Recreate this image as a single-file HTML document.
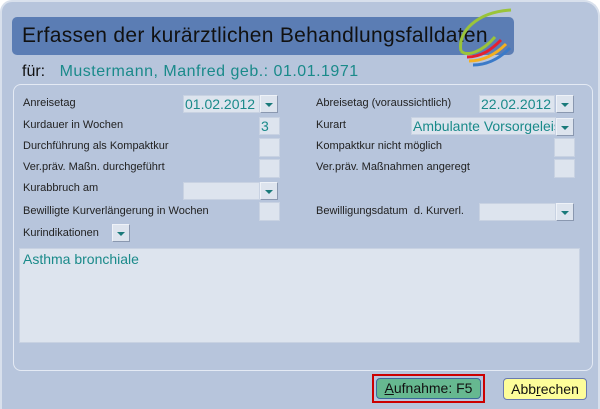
<!DOCTYPE html>
<html><head><style>
*{margin:0;padding:0;box-sizing:border-box}
body{width:600px;height:409px;background:#fff;font-family:"Liberation Sans",Arial,sans-serif;position:relative;overflow:hidden}
.win{position:absolute;left:0;top:0;width:600px;height:409px;background:#b7c5dc;border-radius:12px 16px 0 0;border:2px solid #d8e0ec;border-bottom:none}
.title{position:absolute;left:10px;top:15px;width:502px;height:38px;background:#5b7db4;border-radius:5px;font-family:"Liberation Sans",Arial,sans-serif;font-size:21px;color:#111;padding:7px 0 0 10px;white-space:nowrap;letter-spacing:0.3px}
.fur{position:absolute;left:20px;top:61px;font-size:16px;color:#111;white-space:nowrap}
.fur span{color:#1a8a8a;margin-left:10px;letter-spacing:0.5px}
.panel{position:absolute;left:11px;top:82px;width:580px;height:287px;border:1px solid #e4eaf4;border-radius:8px}
.l{position:absolute;font-size:11px;color:#222;white-space:nowrap}
.in{position:absolute;height:18px;background:#dde4ee;border:1px solid #c8d2e2;font-size:14px;color:#1a8a8a;line-height:16px;padding-left:1px;overflow:hidden;white-space:nowrap}
.btn{position:absolute;width:18px;height:18px;background:#dde4ee;border:1px solid #8a98b0;border-top-color:#eef2f8;border-left-color:#eef2f8}
.btn:after{content:"";position:absolute;left:4px;top:7px;border-left:4px solid transparent;border-right:4px solid transparent;border-top:4px solid #1a7a7a}
.cb{position:absolute;width:21px;height:19px;background:#dde4ee;border:1px solid #c8d2e2}
.ta{position:absolute;left:19px;top:248px;width:561px;height:95px;background:#dde4ee;border:1px solid #c8d2e2;font-size:14px;color:#1a8a8a;padding:2px 3px}
.b1{position:absolute;left:372px;top:374px;width:113px;height:29px;border:2px solid #c00;padding:2px}
.b1 div{width:100%;height:100%;background:#66b890;border:1px solid #3a6a9a;border-radius:4px;font-size:14px;text-align:center;line-height:19px;color:#111}
.b2{position:absolute;left:503px;top:378px;width:84px;height:22px;background:#fdfd9a;border:1px solid #6a7ab0;border-radius:4px;font-size:14px;text-align:center;line-height:20px;color:#111}
</style></head><body>
<div class="win">
<div class="title">Erfassen der kurärztlichen Behandlungsfalldaten</div>
<svg style="position:absolute;left:435px;top:5px" width="80" height="60" viewBox="0 0 80 60">
<path d="M74 3 C40 5 20 25 24 44" stroke="#9ac43a" stroke-width="3" fill="none"/>
<path d="M24 44 C30 50 45 45 58 30" stroke="#9ac43a" stroke-width="3" fill="none"/>
<path d="M30 50 C45 50 55 42 64 33" stroke="#e52030" stroke-width="3" fill="none"/>
<path d="M32 54 C48 54 60 46 69 37" stroke="#f4b020" stroke-width="3" fill="none"/>
<path d="M36 58 C52 58 64 50 73 41" stroke="#3a7ac8" stroke-width="3" fill="none"/>
</svg>
<div class="fur">für: <span>Mustermann, Manfred geb.: 01.01.1971</span></div>
<div class="panel"></div>
</div>
<div class="l" style="left:23px;top:97px">Anreisetag</div>
<div class="in" style="left:183px;top:95px;width:77px">01.02.2012</div><div class="btn" style="left:260px;top:95px"></div>
<div class="l" style="left:23px;top:119px">Kurdauer in Wochen</div>
<div class="in" style="left:259px;top:117px;width:21px">3</div>
<div class="l" style="left:23px;top:140px">Durchführung als Kompaktkur</div>
<div class="cb" style="left:259px;top:138px"></div>
<div class="l" style="left:23px;top:161px">Ver.präv. Maßn. durchgeführt</div>
<div class="cb" style="left:259px;top:159px"></div>
<div class="l" style="left:23px;top:182px">Kurabbruch am</div>
<div class="in" style="left:183px;top:182px;width:77px"></div><div class="btn" style="left:260px;top:182px"></div>
<div class="l" style="left:23px;top:205px">Bewilligte Kurverlängerung in Wochen</div>
<div class="cb" style="left:259px;top:202px"></div>
<div class="l" style="left:23px;top:227px">Kurindikationen</div>
<div class="btn" style="left:112px;top:224px"></div>
<div class="l" style="left:316px;top:97px">Abreisetag (voraussichtlich)</div>
<div class="in" style="left:479px;top:95px;width:76px">22.02.2012</div><div class="btn" style="left:556px;top:95px"></div>
<div class="l" style="left:316px;top:119px">Kurart</div>
<div class="in" style="left:411px;top:117px;width:145px">Ambulante Vorsorgeleistung</div><div class="btn" style="left:556px;top:118px"></div>
<div class="l" style="left:316px;top:140px">Kompaktkur nicht möglich</div>
<div class="cb" style="left:554px;top:138px"></div>
<div class="l" style="left:316px;top:161px">Ver.präv. Maßnahmen angeregt</div>
<div class="cb" style="left:554px;top:159px"></div>
<div class="l" style="left:316px;top:205px">Bewilligungsdatum&nbsp; d. Kurverl.</div>
<div class="in" style="left:479px;top:203px;width:77px"></div><div class="btn" style="left:556px;top:203px"></div>
<div class="ta">Asthma bronchiale</div>
<div class="b1"><div><u>A</u>ufnahme: F5</div></div>
<div class="b2">Abb<u>r</u>echen</div>
</body></html>
